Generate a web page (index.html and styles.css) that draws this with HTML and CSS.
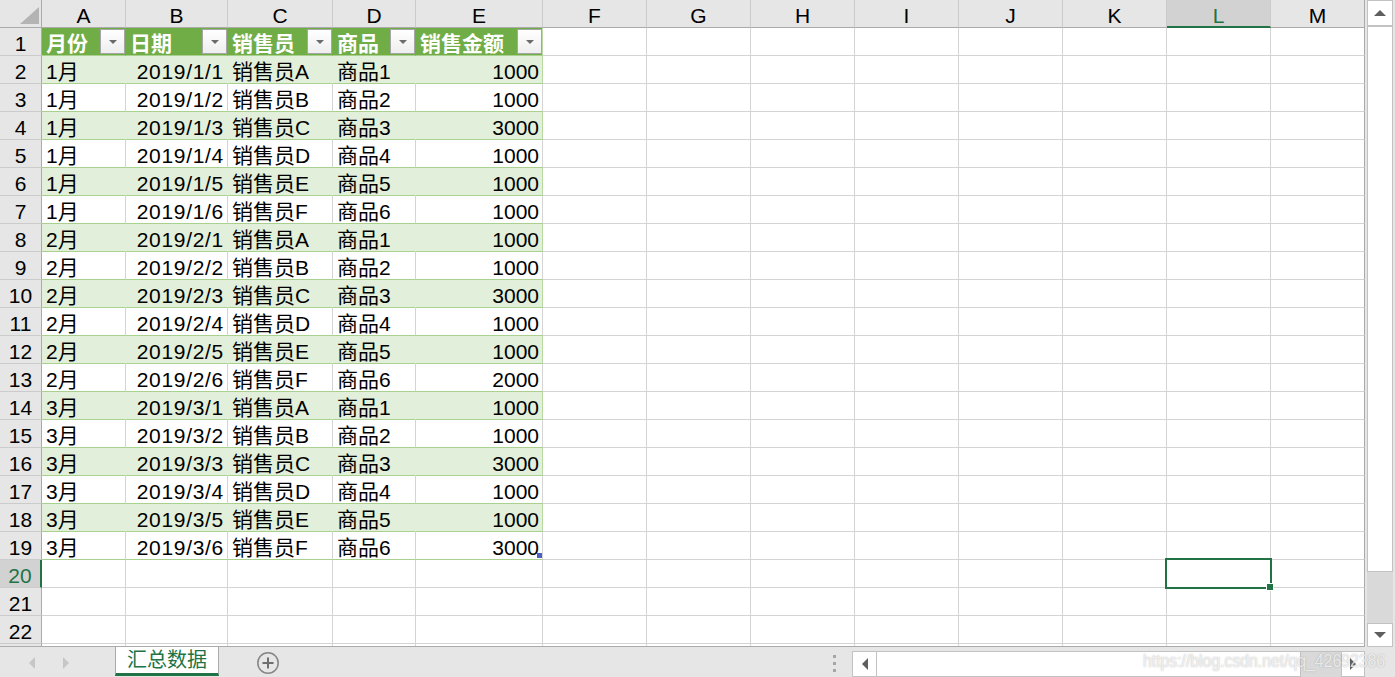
FILE: index.html
```html
<!DOCTYPE html>
<html lang="zh-CN">
<head>
<meta charset="utf-8">
<title>汇总数据</title>
<link rel="stylesheet" href="styles.css">
</head>
<body>
<div class="app">
  <div class="main">
    <div class="grid">
      <div class="row colhead"><div class="corner"><svg width="19" height="17" viewBox="0 0 19 17"><polygon points="19,0 19,17 0,17" fill="#b4b4b4"/></svg></div><div>A</div><div>B</div><div>C</div><div>D</div><div>E</div><div>F</div><div>G</div><div>H</div><div>I</div><div>J</div><div>K</div><div class="colact">L</div><div>M</div></div>
      <div class="row hdr"><div class="rh">1</div><div class="t"><span class="tt">月份</span><span class="fb"></span></div><div class="t"><span class="tt">日期</span><span class="fb"></span></div><div class="t"><span class="tt">销售员</span><span class="fb"></span></div><div class="t"><span class="tt">商品</span><span class="fb"></span></div><div class="t e"><span class="tt">销售金额</span><span class="fb"></span></div><div></div><div></div><div></div><div></div><div></div><div></div><div></div><div></div></div>
      <div class="row band"><div class="rh">2</div><div class="t">1月</div><div class="t n d">2019/1/1</div><div class="t">销售员A</div><div class="t">商品1</div><div class="t n e">1000</div><div></div><div></div><div></div><div></div><div></div><div></div><div></div><div></div></div>
      <div class="row plain"><div class="rh">3</div><div class="t">1月</div><div class="t n d">2019/1/2</div><div class="t">销售员B</div><div class="t">商品2</div><div class="t n e">1000</div><div></div><div></div><div></div><div></div><div></div><div></div><div></div><div></div></div>
      <div class="row band"><div class="rh">4</div><div class="t">1月</div><div class="t n d">2019/1/3</div><div class="t">销售员C</div><div class="t">商品3</div><div class="t n e">3000</div><div></div><div></div><div></div><div></div><div></div><div></div><div></div><div></div></div>
      <div class="row plain"><div class="rh">5</div><div class="t">1月</div><div class="t n d">2019/1/4</div><div class="t">销售员D</div><div class="t">商品4</div><div class="t n e">1000</div><div></div><div></div><div></div><div></div><div></div><div></div><div></div><div></div></div>
      <div class="row band"><div class="rh">6</div><div class="t">1月</div><div class="t n d">2019/1/5</div><div class="t">销售员E</div><div class="t">商品5</div><div class="t n e">1000</div><div></div><div></div><div></div><div></div><div></div><div></div><div></div><div></div></div>
      <div class="row plain"><div class="rh">7</div><div class="t">1月</div><div class="t n d">2019/1/6</div><div class="t">销售员F</div><div class="t">商品6</div><div class="t n e">1000</div><div></div><div></div><div></div><div></div><div></div><div></div><div></div><div></div></div>
      <div class="row band"><div class="rh">8</div><div class="t">2月</div><div class="t n d">2019/2/1</div><div class="t">销售员A</div><div class="t">商品1</div><div class="t n e">1000</div><div></div><div></div><div></div><div></div><div></div><div></div><div></div><div></div></div>
      <div class="row plain"><div class="rh">9</div><div class="t">2月</div><div class="t n d">2019/2/2</div><div class="t">销售员B</div><div class="t">商品2</div><div class="t n e">1000</div><div></div><div></div><div></div><div></div><div></div><div></div><div></div><div></div></div>
      <div class="row band"><div class="rh">10</div><div class="t">2月</div><div class="t n d">2019/2/3</div><div class="t">销售员C</div><div class="t">商品3</div><div class="t n e">3000</div><div></div><div></div><div></div><div></div><div></div><div></div><div></div><div></div></div>
      <div class="row plain"><div class="rh">11</div><div class="t">2月</div><div class="t n d">2019/2/4</div><div class="t">销售员D</div><div class="t">商品4</div><div class="t n e">1000</div><div></div><div></div><div></div><div></div><div></div><div></div><div></div><div></div></div>
      <div class="row band"><div class="rh">12</div><div class="t">2月</div><div class="t n d">2019/2/5</div><div class="t">销售员E</div><div class="t">商品5</div><div class="t n e">1000</div><div></div><div></div><div></div><div></div><div></div><div></div><div></div><div></div></div>
      <div class="row plain"><div class="rh">13</div><div class="t">2月</div><div class="t n d">2019/2/6</div><div class="t">销售员F</div><div class="t">商品6</div><div class="t n e">2000</div><div></div><div></div><div></div><div></div><div></div><div></div><div></div><div></div></div>
      <div class="row band"><div class="rh">14</div><div class="t">3月</div><div class="t n d">2019/3/1</div><div class="t">销售员A</div><div class="t">商品1</div><div class="t n e">1000</div><div></div><div></div><div></div><div></div><div></div><div></div><div></div><div></div></div>
      <div class="row plain"><div class="rh">15</div><div class="t">3月</div><div class="t n d">2019/3/2</div><div class="t">销售员B</div><div class="t">商品2</div><div class="t n e">1000</div><div></div><div></div><div></div><div></div><div></div><div></div><div></div><div></div></div>
      <div class="row band"><div class="rh">16</div><div class="t">3月</div><div class="t n d">2019/3/3</div><div class="t">销售员C</div><div class="t">商品3</div><div class="t n e">3000</div><div></div><div></div><div></div><div></div><div></div><div></div><div></div><div></div></div>
      <div class="row plain"><div class="rh">17</div><div class="t">3月</div><div class="t n d">2019/3/4</div><div class="t">销售员D</div><div class="t">商品4</div><div class="t n e">1000</div><div></div><div></div><div></div><div></div><div></div><div></div><div></div><div></div></div>
      <div class="row band"><div class="rh">18</div><div class="t">3月</div><div class="t n d">2019/3/5</div><div class="t">销售员E</div><div class="t">商品5</div><div class="t n e">1000</div><div></div><div></div><div></div><div></div><div></div><div></div><div></div><div></div></div>
      <div class="row plain"><div class="rh">19</div><div class="t">3月</div><div class="t n d">2019/3/6</div><div class="t">销售员F</div><div class="t">商品6</div><div class="t n e last">3000<span class="resize"></span></div><div></div><div></div><div></div><div></div><div></div><div></div><div></div><div></div></div>
      <div class="row"><div class="rh act">20</div><div></div><div></div><div></div><div></div><div></div><div></div><div></div><div></div><div></div><div></div><div></div><div class="sel"><span class="selbox"></span><span class="handle"></span></div><div></div></div>
      <div class="row"><div class="rh">21</div><div></div><div></div><div></div><div></div><div></div><div></div><div></div><div></div><div></div><div></div><div></div><div></div><div></div></div>
      <div class="row"><div class="rh">22</div><div></div><div></div><div></div><div></div><div></div><div></div><div></div><div></div><div></div><div></div><div></div><div></div><div></div></div>
      <div class="row"><div class="rh"></div><div></div><div></div><div></div><div></div><div></div><div></div><div></div><div></div><div></div><div></div><div></div><div></div><div></div></div>
    </div>
    <div class="vscroll">
      <div class="vbtn up"><span class="tri-up"></span></div>
      <div class="vthumb"></div>
      <div class="vtrack"></div>
      <div class="vbtn down"><span class="tri-down"></span></div>
    </div>
  </div>
  <div class="bar">
    <div class="nav"><span class="tri-l light"></span><span class="tri-r light"></span></div>
    <div class="tab">汇总数据</div>
    <div class="add"><svg width="22" height="22" viewBox="0 0 22 22"><circle cx="11" cy="11" r="10.2" fill="none" stroke="#858585" stroke-width="1.5"/><path d="M11 5.5v11M5.5 11h11" stroke="#6e6e6e" stroke-width="2" fill="none"/></svg></div>
    <div class="spacer"></div>
    <div class="dots"><span></span><span></span><span></span></div>
    <div class="hscroll">
      <div class="hbtn"><span class="tri-l"></span></div>
      <div class="hthumb"></div>
      <div class="htrack"></div>
      <div class="hbtn right"><span class="tri-r"></span></div>
    </div>
    <div class="wm">https://blog.csdn.net/qq_42692386</div>
  </div>
</div>
</body>
</html>
```

FILE: styles.css
```css
* { box-sizing: border-box; margin: 0; padding: 0; }
html, body { width: 1395px; height: 677px; overflow: hidden; }
body {
  font-family: "Liberation Sans", "Noto Sans CJK SC", sans-serif;
  font-size: 21px;
  color: #000;
  background: #e6e6e6;
}
.app { display: flex; flex-direction: column; height: 677px; }
.main { display: flex; height: 647px; }

.grid {
  width: 1365px;
  height: 647px;
  overflow: hidden;
  background: #fff;
  border-bottom: 1px solid #ababab;
}
.row {
  display: grid;
  grid-template-columns: 42px 84px 102px 105px 83px 127px repeat(7, 104px) 94px;
  height: 28px;
}
.row > div {
  border-right: 1px solid #d4d4d4;
  border-bottom: 1px solid #d4d4d4;
  padding: 5px 4px 0;
  line-height: 22px;
  white-space: nowrap;
  overflow: hidden;
}
.row > div:last-child { border-right-color: #ababab; }

.row > .rh {
  background: #e6e6e6;
  border-right-color: #ababab;
  border-bottom-color: #cbcbcb;
  text-align: center;
  padding: 5px 0 0;
}
.row > .rh.act {
  background: #d2d2d2;
  color: #217346;
  border-right: 2px solid #217346;
}

.colhead > div {
  background: #e6e6e6;
  border-right-color: #cbcbcb;
  border-bottom-color: #ababab;
  text-align: center;
  padding: 5px 0 0;
}
.colhead > .corner {
  border-right-color: #ababab;
  display: flex;
  justify-content: flex-end;
  align-items: flex-end;
  padding: 0 2px 3px 0;
}
.corner svg { display: block; }
.colhead > .colact {
  background: #d2d2d2;
  color: #217346;
  border-bottom: 2px solid #217346;
}

/* table */
.hdr .t {
  background: #70ad47;
  color: #fff;
  font-weight: bold;
  border-right-color: #70ad47;
  border-bottom-color: #a9d08e;
  display: flex;
  align-items: flex-start;
  padding: 0 0 0 4px;
}
.tt { flex: 1; padding-top: 5px; line-height: 22px; overflow: hidden; }
.fb {
  flex: none;
  width: 25px;
  height: 25px;
  margin-top: 1px;
  border: 1px solid #a6a6a6;
  background: linear-gradient(#ffffff, #eeeeee);
  display: flex;
  align-items: center;
  justify-content: center;
}
.fb::after {
  content: "";
  border-left: 4px solid transparent;
  border-right: 4px solid transparent;
  border-top: 4px solid #6b6b6b;
}
.band .t {
  background: #e2efda;
  border-right-color: #e2efda;
  border-bottom-color: #a9d08e;
}
.plain .t { border-bottom-color: #a9d08e; }
.hdr .t.e, .band .t.e { border-right-color: #b9d9a3; }
.row > .n { text-align: right; padding-right: 3px; }
.row > .d { letter-spacing: 0.7px; }
.row > .last { position: relative; }
.resize {
  position: absolute;
  right: 0;
  bottom: 1px;
  width: 5px;
  height: 5px;
  background: #4f5fc0;
}

/* selection */
.row > .sel { position: relative; overflow: visible; }
.selbox {
  position: absolute;
  left: -2px; top: -2px; right: -2px; bottom: -2px;
  border: 2px solid #217346;
}
.handle {
  position: absolute;
  right: -4px;
  bottom: -4px;
  width: 8px;
  height: 8px;
  background: #217346;
  border: 1px solid #fff;
}

/* vertical scrollbar */
.vscroll {
  width: 30px;
  height: 647px;
  padding: 0 2px;
  display: flex;
  flex-direction: column;
  background: #e6e6e6;
}
.vbtn {
  background: #fff;
  border: 1px solid #c2c2c2;
  display: flex;
  align-items: center;
  justify-content: center;
}
.vbtn.up { height: 26px; }
.vbtn.down { height: 24px; }
.vthumb { height: 546px; background: #fff; border: 1px solid #c2c2c2; }
.vtrack { flex: 1; background: #d9d9d9; }
.tri-up {
  border-left: 6px solid transparent;
  border-right: 6px solid transparent;
  border-bottom: 6px solid #5f5f5f;
}
.tri-down {
  border-left: 6px solid transparent;
  border-right: 6px solid transparent;
  border-top: 6px solid #5f5f5f;
}
.tri-l {
  border-top: 6px solid transparent;
  border-bottom: 6px solid transparent;
  border-right: 6px solid #5f5f5f;
}
.tri-r {
  border-top: 6px solid transparent;
  border-bottom: 6px solid transparent;
  border-left: 6px solid #5f5f5f;
}
.tri-l.light { border-right-color: #c6c6c6; }
.tri-r.light { border-left-color: #c6c6c6; }

/* bottom bar */
.bar {
  height: 30px;
  display: flex;
  align-items: flex-start;
  position: relative;
  background: #e6e6e6;
}
.nav {
  width: 115px;
  height: 30px;
  display: flex;
  align-items: center;
  gap: 28px;
  padding: 2px 0 0 29px;
}
.tab {
  width: 104px;
  height: 29px;
  background: #fff;
  border-left: 1px solid #ababab;
  border-right: 1px solid #ababab;
  border-bottom: 3px solid #217346;
  color: #217346;
  font-family: "Noto Sans CJK SC", sans-serif;
  font-size: 20px;
  line-height: 24px;
  text-align: center;
}
.add { margin: 5px 0 0 38px; width: 22px; height: 22px; }
.add svg { display: block; }
.spacer { flex: 1; }
.dots {
  width: 3px;
  margin-top: 8px;
  display: flex;
  flex-direction: column;
  gap: 4px;
}
.dots span { width: 3px; height: 3px; background: #a6a6a6; }
.hscroll {
  width: 513px;
  height: 26px;
  margin: 4px 30px 0 16px;
  display: flex;
}
.hbtn {
  width: 25px;
  background: #fff;
  border: 1px solid #c2c2c2;
  display: flex;
  align-items: center;
  justify-content: center;
}
.hbtn.right { width: 24px; }
.hthumb {
  width: 424px;
  background: #fff;
  border: 1px solid #c2c2c2;
  border-left: none;
}
.htrack { flex: 1; background: #d9d9d9; border-top: 1px solid #c2c2c2; }
.wm {
  position: absolute;
  left: 1143px;
  top: 4px;
  font-family: "Liberation Sans", sans-serif;
  font-size: 19px;
  line-height: 19px;
  white-space: nowrap;
  color: rgba(255, 255, 255, 0.75);
  text-shadow: 0 0 1.5px rgba(110, 110, 110, 0.55);
  transform: scaleX(0.83);
  transform-origin: left top;
}
```
